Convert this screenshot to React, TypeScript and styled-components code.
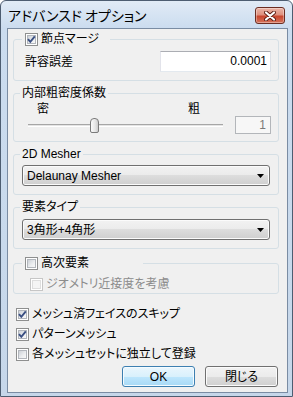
import React, { FC, ReactNode } from 'react';
import styled, { createGlobalStyle } from 'styled-components';

const GlobalStyle = createGlobalStyle`
  html, body {
    margin: 0;
    padding: 0;
    background: #fff;
  }
  body {
    font-family: "Liberation Sans", "Noto Sans CJK JP", sans-serif;
    font-size: 12px;
    color: #000;
    font-feature-settings: "palt";
  }
`;

const Window = styled.div`
  width: 293px;
  height: 397px;
  box-sizing: border-box;
  border: 1px solid #4d5d71;
  border-radius: 6px 6px 0 0;
  background: linear-gradient(180deg, #e1ebf6 0px, #cbdcef 27px, #c6d7ea 100%);
  display: flex;
  flex-direction: column;
  padding: 0 4px 3px 6px;
`;

const TitleBar = styled.div`
  height: 27px;
  flex: none;
  display: flex;
  align-items: flex-start;
  justify-content: space-between;
`;

const TitleText = styled.div`
  padding: 5px 0 0 1px;
  font-family: "Noto Sans CJK JP", sans-serif;
  font-size: 14px;
  line-height: 18px;
`;

const CloseButton = styled.div`
  margin: 6px 3px 0 0;
  width: 30px;
  height: 17px;
  box-sizing: border-box;
  border: 1px solid #6b2d22;
  border-radius: 3px;
  background: linear-gradient(180deg, #ebb5a7 0%, #de907e 45%, #c8462e 55%, #d5735b 100%);
  box-shadow: inset 0 0 0 1px rgba(255, 255, 255, 0.35);
  display: flex;
  align-items: center;
  justify-content: center;
`;

const Client = styled.div`
  flex: 1;
  border: 1px solid #7a8ca3;
  background: #f0f0f0;
  display: flex;
  flex-direction: column;
  padding: 0 8px 0 5px;
`;

const Group = styled.fieldset<{ $mt: number; $h: number }>`
  margin: ${(p) => p.$mt}px 0 0;
  padding: 0;
  min-width: 0;
  height: ${(p) => p.$h}px;
  box-sizing: border-box;
  border: 1px solid #d5dfe5;
  border-radius: 3px;
`;

const GroupLegend = styled.legend<{ $ml: number; $w?: number; $pl: number }>`
  margin-left: ${(p) => p.$ml}px;
  padding: 0 2px 0 ${(p) => p.$pl}px;
  width: ${(p) => (p.$w ? `${p.$w}px` : 'auto')};
  box-sizing: border-box;
  height: 14px;
  line-height: 14px;
`;

const GroupBody = styled.div<{ $pad: string }>`
  padding: ${(p) => p.$pad};
`;

const FieldRow = styled.div`
  display: flex;
  align-items: center;
  justify-content: space-between;
  line-height: 14px;
`;

const TextBox = styled.div`
  width: 111px;
  height: 21px;
  box-sizing: border-box;
  background: #fff;
  border: 1px solid;
  border-color: #abadb3 #dbdfe6 #e3e9ef #e2e3ea;
  text-align: right;
  padding-right: 3px;
  line-height: 19px;
`;

const SliderArea = styled.div`
  display: grid;
  grid-template-columns: 195px 36px;
  grid-template-rows: 14px 18px;
  column-gap: 12px;
  padding: 2px 7px 0 14px;
`;

const TickLabels = styled.div`
  display: flex;
  justify-content: space-between;
  padding: 0 23px 0 9px;
  line-height: 14px;
`;

const Slider = styled.div`
  position: relative;
  grid-row: 2;
  display: flex;
  align-items: center;
`;

const SliderTrack = styled.div`
  width: 100%;
  height: 3px;
  box-sizing: border-box;
  border-top: 1px solid #a6a6a6;
  border-bottom: 1px solid #ffffff;
  background: #e4e4e4;
`;

const SliderThumb = styled.div<{ $left: number }>`
  position: absolute;
  left: ${(p) => p.$left}px;
  top: 2px;
  width: 9px;
  height: 15px;
  box-sizing: border-box;
  border: 1px solid #7b7b7b;
  border-radius: 4px 4px 2px 2px;
  background: linear-gradient(90deg, #fbfbfb 0%, #e6e6e6 60%, #cdcdcd 100%);
`;

const NumBox = styled.div`
  grid-row: 2;
  height: 18px;
  box-sizing: border-box;
  border: 1px solid #b3b6ba;
  background: #f7f7f7;
  color: #7a7a7a;
  text-align: right;
  padding-right: 4px;
  line-height: 16px;
`;

const Combo = styled.div`
  height: 21px;
  box-sizing: border-box;
  border: 1px solid #707070;
  border-radius: 3px;
  background: linear-gradient(180deg, #f2f2f2 0%, #ebebeb 50%, #dddddd 50%, #cfcfcf 100%);
  box-shadow: inset 0 0 0 1px #fbfbfb;
  display: flex;
  align-items: center;
  justify-content: space-between;
  padding: 0 5px 0 4px;
  line-height: 14px;
`;

const CheckLabel = styled.span<{ $disabled?: boolean }>`
  display: flex;
  align-items: center;
  gap: 3px;
  height: 14px;
  line-height: 14px;
  color: ${(p) => (p.$disabled ? '#8c8c8c' : '#000')};
`;

const Box = styled.span<{ $disabled?: boolean }>`
  position: relative;
  flex: none;
  width: 13px;
  height: 13px;
  box-sizing: border-box;
  border: 1px solid ${(p) => (p.$disabled ? '#c6c6c6' : '#8e8f8f')};
  background: #fff;
  &::before {
    content: '';
    position: absolute;
    left: 1px;
    top: 1px;
    width: 9px;
    height: 9px;
    box-sizing: border-box;
    border: 1px solid ${(p) => (p.$disabled ? '#dedede' : '#b2b6bc')};
    background: ${(p) =>
      p.$disabled ? '#f5f5f5' : 'linear-gradient(135deg, #cdd1d7 0%, #eceef0 60%, #f8f8f8 100%)'};
  }
  svg {
    position: absolute;
    left: 0;
    top: 0;
  }
`;

const CheckList = styled.div`
  display: flex;
  flex-direction: column;
  margin: 10px 0 0 3px;
`;

const CheckRow = styled.div`
  height: 20px;
  display: flex;
  align-items: center;
`;

const ButtonRow = styled.div`
  display: flex;
  justify-content: flex-end;
  gap: 10px;
  margin: 2px 1px 0 0;
`;

const Button = styled.div<{ $default?: boolean }>`
  width: 73px;
  height: 21px;
  box-sizing: border-box;
  border: 1px solid ${(p) => (p.$default ? '#3c7fb1' : '#707070')};
  border-radius: 3px;
  background: ${(p) =>
    p.$default
      ? 'linear-gradient(180deg, #eaf6fd 0%, #d9f0fc 50%, #bee6fd 50%, #a7d9f5 100%)'
      : 'linear-gradient(180deg, #f2f2f2 0%, #ebebeb 50%, #dddddd 50%, #cfcfcf 100%)'};
  box-shadow: inset 0 0 0 1px ${(p) => (p.$default ? '#f4fbff' : '#fbfbfb')};
  display: flex;
  align-items: center;
  justify-content: center;
  line-height: 14px;
`;

const CheckItem: FC<{ checked?: boolean; disabled?: boolean; children: ReactNode }> = ({
  checked,
  disabled,
  children
}) => (
  <CheckLabel $disabled={disabled}>
    <Box $disabled={disabled}>
      {checked && (
        <svg width="11" height="11" viewBox="0 0 11 11">
          <path d="M2 5.2 L4.3 7.8 L8.8 2.3" fill="none" stroke="#3a4f82" strokeWidth="1.9" />
        </svg>
      )}
    </Box>
    {children}
  </CheckLabel>
);

const DropArrow = () => (
  <svg width="7" height="4" viewBox="0 0 7 4">
    <path d="M0 0 H7 L3.5 4 Z" fill="#000" />
  </svg>
);

const App: FC = () => {
  return (
    <>
      <GlobalStyle />
      <Window>
        <TitleBar>
          <TitleText>アドバンスド オプション</TitleText>
          <CloseButton>
            <svg width="12" height="10" viewBox="0 0 12 10">
              <path d="M2 1.5 L10 8.5 M10 1.5 L2 8.5" stroke="#5b1c12" strokeWidth="4" strokeLinecap="round" />
              <path d="M2 1.5 L10 8.5 M10 1.5 L2 8.5" stroke="#ffffff" strokeWidth="2.2" strokeLinecap="round" />
            </svg>
          </CloseButton>
        </TitleBar>
        <Client>
          <Group $mt={3} $h={49}>
            <GroupLegend $ml={8} $pl={3} $w={88}>
              <CheckItem checked>節点マージ</CheckItem>
            </GroupLegend>
            <GroupBody $pad="5px 7px 0 11px">
              <FieldRow>
                <span>許容誤差</span>
                <TextBox>0.0001</TextBox>
              </FieldRow>
            </GroupBody>
          </Group>

          <Group $mt={5} $h={56}>
            <GroupLegend $ml={6} $pl={2}>内部粗密度係数</GroupLegend>
            <SliderArea>
              <TickLabels>
                <span>密</span>
                <span>粗</span>
              </TickLabels>
              <Slider>
                <SliderTrack />
                <SliderThumb $left={62} />
              </Slider>
              <NumBox>1</NumBox>
            </SliderArea>
          </Group>

          <Group $mt={5} $h={48}>
            <GroupLegend $ml={6} $pl={2}>2D Mesher</GroupLegend>
            <GroupBody $pad="4px 8px 0 8px">
              <Combo>
                <span>Delaunay Mesher</span>
                <DropArrow />
              </Combo>
            </GroupBody>
          </Group>

          <Group $mt={5} $h={49}>
            <GroupLegend $ml={6} $pl={2}>要素タイプ</GroupLegend>
            <GroupBody $pad="5px 8px 0 8px">
              <Combo>
                <span>3角形+4角形</span>
                <DropArrow />
              </Combo>
            </GroupBody>
          </Group>

          <Group $mt={7} $h={38}>
            <GroupLegend $ml={8} $pl={3} $w={121}>
              <CheckItem>高次要素</CheckItem>
            </GroupLegend>
            <GroupBody $pad="7px 0 0 16px">
              <CheckItem disabled>ジオメトリ近接度を考慮</CheckItem>
            </GroupBody>
          </Group>

          <CheckList>
            <CheckRow>
              <CheckItem checked>メッシュ済フェイスのスキップ</CheckItem>
            </CheckRow>
            <CheckRow>
              <CheckItem checked>パターンメッシュ</CheckItem>
            </CheckRow>
            <CheckRow>
              <CheckItem>各メッシュセットに独立して登録</CheckItem>
            </CheckRow>
          </CheckList>

          <ButtonRow>
            <Button $default>OK</Button>
            <Button>閉じる</Button>
          </ButtonRow>
        </Client>
      </Window>
    </>
  );
};

export default App;
